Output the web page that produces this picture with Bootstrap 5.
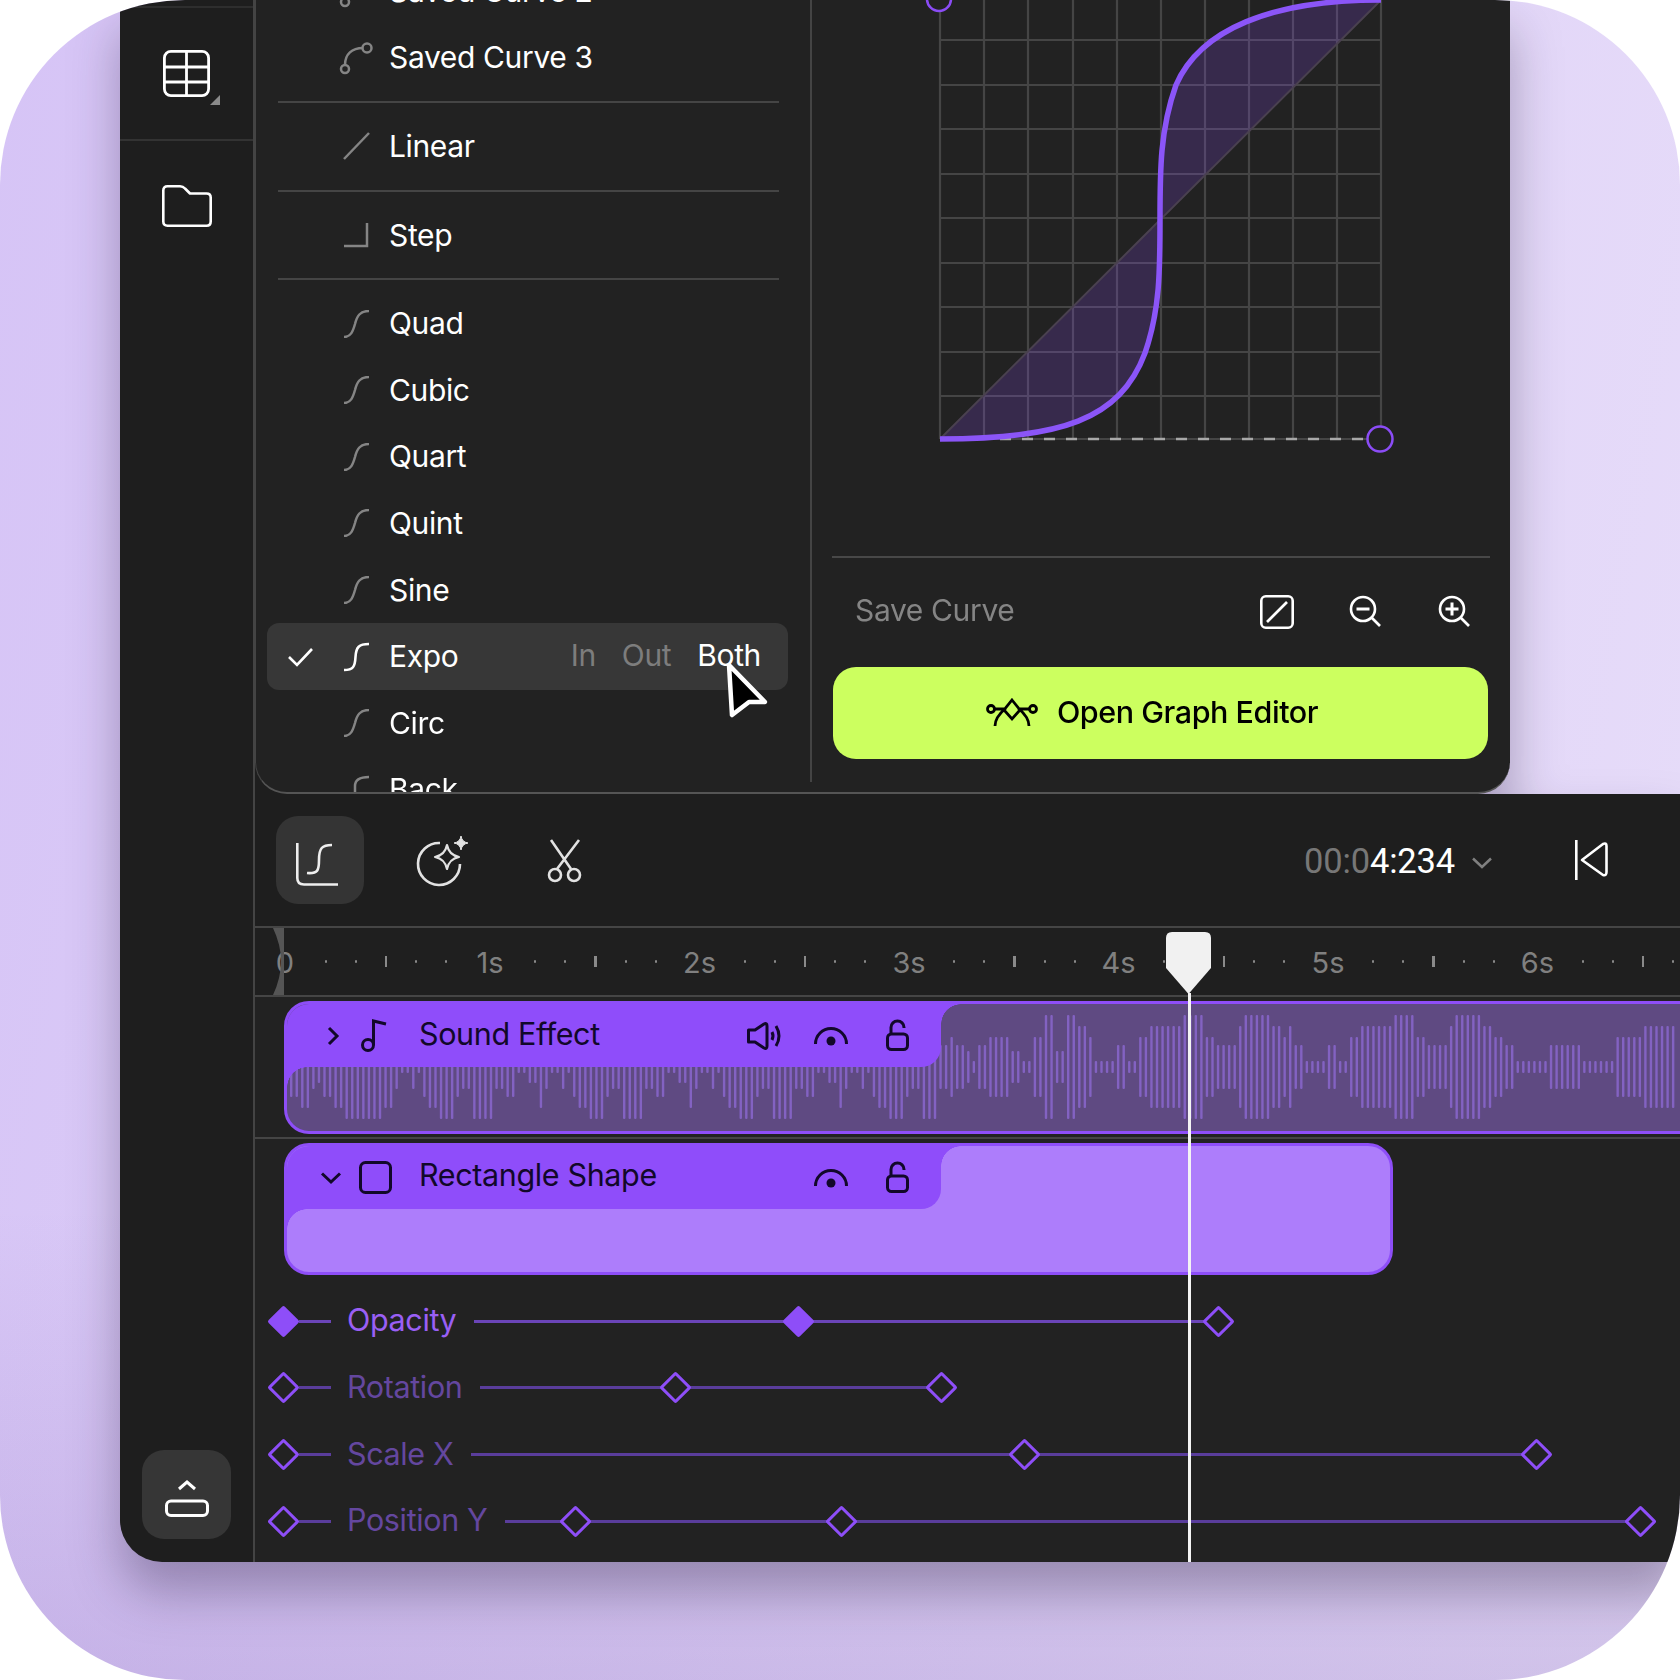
<!DOCTYPE html>
<html lang="en">
<head>
<meta charset="UTF-8">
<title>Curve Editor</title>
<link href="https://cdn.jsdelivr.net/npm/bootstrap@5.3.0/dist/css/bootstrap.min.css" rel="stylesheet">
<style>
body { background: #fff; margin: 0; font-family: Inter, "Liberation Sans", sans-serif; }
svg { display: block; overflow: visible; flex: none; }
.tile { width: 1680px; height: 1680px; border-radius: 185px; overflow: hidden; padding-left: 120px;
  background: linear-gradient(180deg, transparent 72%, rgba(120,90,170,.2)), linear-gradient(100deg, #d6c4f6, #e7ddf9); }
.appwin { width: 1560px; height: 1562px; filter: drop-shadow(0 30px 25px rgba(20,10,40,.3)); }
.rail { width: 135px; flex: none; background: #1e1e1e; border-right: 2px solid #444; border-bottom-left-radius: 42px; box-shadow: 34px 0 0 #1e1e1e; }
.rail-top { height: 135px; margin-top: 6px; border-top: 2px solid #2e2e2e; border-bottom: 2px solid #333; }
.folder-ico { margin-top: 44px; }
.rail-btn { width: 89px; height: 89px; margin-bottom: 23px; background: #363636; border-radius: 22px; }
.rail-btn svg { margin-top: 7px; }
.main-col { width: 1425px; z-index: 1; }
.curve-panel { width: 1255px; height: 794px; flex: none; background: #222; border-bottom: 2px solid #555; border-left: 1px solid #444; border-radius: 0 0 32px 32px; overflow: hidden; }
.curve-list { width: 554px; flex: none; margin-top: -42px; color: #fff; font-size: 30px; letter-spacing: -.012em; }
.ease-row { height: 66.6px; margin: 0 22px 0 11px; padding: 0 27px 0 21px; border-radius: 12px; }
.ease-row.picked { background: #373737; }
.check-slot { width: 55px; flex: none; }
.icon-slot { width: 46px; flex: none; }
.list-rule { height: 2px; background: #454545; margin: 10px 31px 10px 22px; }
.dir-tabs { gap: 26px; color: #7d7d7d; margin-top: -3px; }
.dir-tabs .on { color: #fff; }
.ptr { position: absolute; left: 469px; top: 662px; }
.curve-side { width: 700px; flex: none; border-left: 2px solid #444; margin-bottom: 10px; height: 782px; }
.graph-box { height: 556px; flex: none; }
.side-rule { height: 2px; background: #484848; margin: 0 20px; flex: none; }
.save-row { height: 109px; padding: 0 40px 0 43px; color: #858585; font-size: 30px; letter-spacing: -.012em; flex: none; }
.save-row span { margin-top: -5px; }
.save-row svg { margin-top: -2px; }
.open-btn { height: 92px; margin: 0 22px 0 21px; padding: 0 16px 0 0; background: #ccff5f; border-radius: 23px; color: #000; font-size: 30.5px; font-weight: 500; letter-spacing: -.015em; gap: 20px; flex: none; }
.open-btn:hover { background: #ccff5f; color: #000; }
.open-btn span { margin-top: -3px; }
.timeline { flex-grow: 1; background: #222; position: relative; overflow: hidden; }
.tool-bar { height: 132px; background: #1e1e1e; padding: 0 72px 0 21px; flex: none; }
.tool-on { width: 88px; height: 88px; background: #343434; border-radius: 22px; }
.tool-on svg { margin: 7px 6px 0 0; }
.clock { font-size: 34.5px; color: #777; letter-spacing: -.005em; font-family: Roboto, Inter, sans-serif; margin-top: 3px; }
.clock b { color: #fff; font-weight: 400; }
.ruler { height: 71px; background: #1f1f1f; border-top: 2px solid #454545; border-bottom: 2px solid #454545; color: #808080; font-size: 29px; flex: none; position: relative; overflow: hidden; }
.sec-cell { width: 209.5px; flex: none; gap: 28px; }
.sec-cell:first-child { margin-left: -18.5px; }
.sec-name { width: 88px; margin-right: -28px; flex: none; text-align: center; padding-top: 2px; }
.sec-dot { width: 2px; height: 3px; background: #8a8a8a; border-radius: 1px; flex: none; }
.sec-tick { width: 2.5px; height: 11px; background: #8a8a8a; flex: none; }
.zero-mark { position: absolute; left: 18px; top: 0; }
.track { padding: 4px 0 3px 29px; border-bottom: 2px solid #454545; }
.track-plain { padding: 4px 0 13px 29px; }
.clip { position: relative; height: 133px; border: 3px solid #8e4ef8; border-radius: 25px; overflow: hidden; background: #5f4a82; }
.clip-sound { width: 1500px; }
.clip-shape { width: 1109px; height: 132px; background: #ad7dfb; }
.clip-head { position: absolute; left: 0; top: 0; width: 654px; height: 63px; background: #8f4dfa; padding: 0 32px 0 40px; border-radius: 0 0 20px 0; color: #12082a; font-size: 30.5px; letter-spacing: -.012em; }
.clip-head::before, .clip-head::after { content: ""; position: absolute; width: 20px; height: 20px; }
.clip-head::before { left: 0; top: 100%; background: radial-gradient(circle at 100% 100%, transparent 19.5px, #8f4dfa 20px); }
.clip-head::after { left: 100%; top: 0; background: radial-gradient(circle at 100% 100%, transparent 19.5px, #8f4dfa 20px); }
.clip-name { margin: -3px auto 0 32px; }
.clip-shape .clip-name { margin-left: 27px; margin-top: -5px; }
.clip-shape .chev-down { margin-left: -6px; }
.kf-row { position: relative; height: 66.6px; padding-left: 13px; font-size: 30.5px; letter-spacing: -.012em; color: #64479f; }
.kf-row.live { color: #9a5ff5; }
.kf-stub { width: 32px; height: 3px; background: #5a3d9c; flex: none; }
.kf-line { height: 3px; background: #5a3d9c; flex-grow: 1; margin-left: 18px; }
.live .kf-stub, .live .kf-line { background: #6b45b8; }
.kf-name { margin-left: 16px; flex: none; margin-top: -2px; }
.kf { width: 23px; height: 23px; border: 3px solid #8e4ef8; border-radius: 2px; background: #222; transform: rotate(45deg); flex: none; margin: 0 4px; }
.kf.full { background: #8e4ef8; }
.kf.placed { position: absolute; top: 21.8px; margin: 0; }
.play-head { position: absolute; left: 911px; top: 138px; width: 45px; bottom: 0; z-index: 2; }
.play-line { position: absolute; left: 22px; top: 61px; bottom: 0; width: 2.5px; background: #f4f4f4; }
</style>
</head>
<body>
<svg width="0" height="0" class="position-absolute">
  <symbol id="ease" viewBox="0 0 27 28"><path d="M1 27C8 27 10 21 12 14C14 6 17 1 26 1" fill="none" stroke="#858585" stroke-width="2.5"/></symbol>
</svg>

<div class="tile">
  <div class="appwin d-flex">
    <aside class="rail d-flex flex-column align-items-center position-relative">
      <div class="rail-top w-100 d-flex justify-content-center align-items-center">
        <svg width="47" height="47" viewBox="0 0 47 47" fill="none" stroke="#fff" stroke-width="2.8"><rect x="1.4" y="1.4" width="44.2" height="44.2" rx="6.5"/><path d="M23.5 1V46M1 17H46M1 32H46"/><path d="M57 55H47L57 45Z" fill="#8a8a8a" stroke="none"/></svg>
      </div>
      <svg class="folder-ico" width="50" height="42" viewBox="0 0 50 42" fill="none" stroke="#fff" stroke-width="2.6" stroke-linejoin="round"><path d="M1.3 5.5Q1.3 1.3 5.5 1.3H18Q21 1.3 23 3.5L28 8.5H44.5Q48.7 8.5 48.7 12.5V36.5Q48.7 40.7 44.5 40.7H5.5Q1.3 40.7 1.3 36.5Z"/></svg>
      <div class="rail-btn mt-auto d-flex align-items-center justify-content-center">
        <svg width="44" height="37" viewBox="0 0 44 37" fill="none" stroke="#fff" stroke-width="3"><path d="M14 9L22 2L30 9"/><rect x="1.5" y="21" width="41" height="14.5" rx="4.5"/></svg>
      </div>
    </aside>

    <div class="main-col d-flex flex-column">
      <section class="curve-panel d-flex position-relative">
        <div class="curve-list">
          <div class="ease-row d-flex align-items-center"><span class="check-slot"></span><span class="icon-slot"><svg width="27" height="28" viewBox="0 0 27 28" fill="none" stroke="#858585" stroke-width="2.5"><circle cx="2" cy="25" r="4"/><circle cx="24" cy="4" r="4.5"/><path d="M2 21C2 10 9 4 20 4"/></svg></span>Saved Curve 2</div>
          <div class="ease-row d-flex align-items-center"><span class="check-slot"></span><span class="icon-slot"><svg width="27" height="28" viewBox="0 0 27 28" fill="none" stroke="#858585" stroke-width="2.5"><circle cx="2" cy="25" r="4"/><circle cx="24" cy="4" r="4.5"/><path d="M2 21C2 10 9 4 20 4"/></svg></span>Saved Curve 3</div>
          <div class="list-rule"></div>
          <div class="ease-row d-flex align-items-center"><span class="check-slot"></span><span class="icon-slot"><svg width="27" height="28" viewBox="0 0 27 28" fill="none" stroke="#858585" stroke-width="2.5"><path d="M1 27L26 1"/></svg></span>Linear</div>
          <div class="list-rule"></div>
          <div class="ease-row d-flex align-items-center"><span class="check-slot"></span><span class="icon-slot"><svg width="27" height="28" viewBox="0 0 27 28" fill="none" stroke="#858585" stroke-width="2.5"><path d="M1 25H24V2"/></svg></span>Step</div>
          <div class="list-rule"></div>
          <div class="ease-row d-flex align-items-center"><span class="check-slot"></span><span class="icon-slot"><svg width="27" height="28"><use href="#ease"/></svg></span>Quad</div>
          <div class="ease-row d-flex align-items-center"><span class="check-slot"></span><span class="icon-slot"><svg width="27" height="28"><use href="#ease"/></svg></span>Cubic</div>
          <div class="ease-row d-flex align-items-center"><span class="check-slot"></span><span class="icon-slot"><svg width="27" height="28"><use href="#ease"/></svg></span>Quart</div>
          <div class="ease-row d-flex align-items-center"><span class="check-slot"></span><span class="icon-slot"><svg width="27" height="28"><use href="#ease"/></svg></span>Quint</div>
          <div class="ease-row d-flex align-items-center"><span class="check-slot"></span><span class="icon-slot"><svg width="27" height="28"><use href="#ease"/></svg></span>Sine</div>
          <div class="ease-row picked d-flex align-items-center">
            <span class="check-slot"><svg width="25" height="20" viewBox="0 0 25 20" fill="none" stroke="#fff" stroke-width="2.6"><path d="M1 10L9 18L24 2"/></svg></span>
            <span class="icon-slot"><svg width="27" height="28" viewBox="0 0 27 28" fill="none" stroke="#fff" stroke-width="2.6"><path d="M1 27C10 27 12 24 12.5 14C13 4 16 1 26 1"/></svg></span>Expo
            <span class="dir-tabs d-flex ms-auto"><span>In</span><span>Out</span><span class="on">Both</span></span>
          </div>
          <div class="ease-row d-flex align-items-center"><span class="check-slot"></span><span class="icon-slot"><svg width="27" height="28"><use href="#ease"/></svg></span>Circ</div>
          <div class="ease-row d-flex align-items-center"><span class="check-slot"></span><span class="icon-slot"><svg width="27" height="28" viewBox="0 0 27 28" fill="none" stroke="#858585" stroke-width="2.5"><path d="M12 28V10C12 4 17 1 26 1"/></svg></span>Back</div>
        </div>

        <svg class="ptr" width="42" height="54" viewBox="727 663 42 54"><path d="M731 666L767 703H751L734 716Z" fill="#000" stroke="#fff" stroke-width="4.5" stroke-linejoin="round"/></svg>

        <div class="curve-side d-flex flex-column">
          <div class="graph-box">
            <svg width="698" height="556" viewBox="812 0 698 556" fill="none">
              <path d="M940-3V439M984-3V439M1028-3V439M1073-3V439M1117-3V439M1161-3V439M1205-3V439M1249-3V439M1293-3V439M1337-3V439M1381-3V439M940 40H1381M940 85H1381M940 129H1381M940 174H1381M940 218H1381M940 263H1381M940 307H1381M940 352H1381M940 396H1381M940 439H1381" stroke="#454545" stroke-width="2.2"/>
              <path d="M940 439C1060 439 1120 420 1145 353C1160 310 1160 270 1160 220C1160 170 1160 130 1176 85C1200 30 1270 0 1381 0Z" fill="#8b4cf6" fill-opacity=".2"/>
              <path d="M940 439L1381 0" stroke="#4a4150" stroke-width="2"/>
              <path d="M1000 439H1366" stroke="#a8a8a8" stroke-width="2.5" stroke-dasharray="11 11"/>
              <path d="M940 439C1060 439 1120 420 1145 353C1160 310 1160 270 1160 220C1160 170 1160 130 1176 85C1200 30 1270 0 1381 0" stroke="#8b55f8" stroke-width="5.5"/>
              <circle cx="939" cy="-1" r="12" fill="#222" stroke="#8b4cf6" stroke-width="2.5"/>
              <circle cx="1380" cy="439" r="12.5" fill="#222" stroke="#8b4cf6" stroke-width="2.5"/>
            </svg>
          </div>
          <div class="side-rule"></div>
          <div class="save-row d-flex align-items-center">
            <span class="me-auto">Save Curve</span>
            <svg width="34" height="34" viewBox="0 0 34 34" fill="none" stroke="#fff" stroke-width="2.6"><rect x="1.3" y="1.3" width="31.4" height="31.4" rx="4.5"/><path d="M7 27L27 7"/></svg>
            <svg style="margin-left:55px" width="32" height="31" viewBox="0 0 32 31" fill="none" stroke="#fff" stroke-width="2.6"><circle cx="14" cy="13" r="12"/><path d="M23 22L31 30"/><path d="M7.5 13H20.5" stroke-width="3"/></svg>
            <svg style="margin-left:57px" width="32" height="31" viewBox="0 0 32 31" fill="none" stroke="#fff" stroke-width="2.6"><circle cx="14" cy="13" r="12"/><path d="M23 22L31 30"/><path d="M7.5 13H20.5M14 6.5V19.5" stroke-width="3"/></svg>
          </div>
          <button class="btn open-btn d-flex align-items-center justify-content-center border-0" type="button">
            <svg width="50" height="28" viewBox="0 0 50 28" fill="none" stroke="#000" stroke-width="2.8"><circle cx="4" cy="10" r="3.5"/><circle cx="46" cy="10" r="3.5"/><path d="M25 1L33 11L25 20L17 11ZM8 10H17M33 10H42M8 27C8 20 13 14 19 9M42 27C42 20 37 14 31 9"/></svg>
            <span>Open Graph Editor</span>
          </button>
        </div>
      </section>

      <section class="timeline d-flex flex-column">
        <div class="tool-bar d-flex align-items-center">
          <div class="tool-on d-flex align-items-center justify-content-center">
            <svg width="43" height="44" viewBox="0 0 43 44" fill="none" stroke="#eee" stroke-width="2.6"><path d="M1.3 1V36Q1.3 42.5 8 42.5H42"/><path d="M11 31C22 32 23 28 23 18C23 6 26 3 36 3"/></svg>
          </div>
          <svg style="margin:3px 0 0 52px" width="54" height="54" viewBox="0 0 54 54" fill="none" stroke="#e2e2e2" stroke-width="2.6"><path d="M24 8A21 21 0 1 0 44 29"/><path d="M31 10Q33 20 43 22Q33 24 31 34Q29 24 19 22Q29 20 31 10Z" stroke-width="2.2" stroke-linejoin="round"/><path d="M45 1Q46 7 52 8Q46 9 45 15Q44 9 38 8Q44 7 45 1Z" fill="#e2e2e2" stroke-width="1"/></svg>
          <svg style="margin-left:77px" width="36" height="46" viewBox="0 0 36 46" fill="none" stroke="#e2e2e2" stroke-width="2.6"><path d="M4 3L24 32M32 3L10 32"/><circle cx="8" cy="38" r="6"/><circle cx="27" cy="38" r="6"/></svg>
          <span class="clock ms-auto">00:0<b>4:234</b></span>
          <svg style="margin:5px 0 0 17px" width="20" height="12" viewBox="0 0 20 12" fill="none" stroke="#808080" stroke-width="2.5"><path d="M1 1.5L10 10L19 1.5"/></svg>
          <svg style="margin-left:83px" width="33" height="40" viewBox="0 0 33 40" fill="none" stroke="#fff" stroke-width="2.6" stroke-linejoin="round"><path d="M1.3 0V40"/><path d="M7 20L28 4Q31.5 2.5 31.5 6V32Q31.5 36 28 35Z"/></svg>
        </div>

        <div class="ruler d-flex align-items-center" id="ruler">
          <svg class="zero-mark" width="12" height="67" viewBox="0 0 12 67"><path d="M0 0H11V67H0Q8 50 8 33Q8 17 0 0Z" fill="#555"/></svg>
        </div>

        <div class="track">
          <div class="clip clip-sound">
            <svg id="wave" width="1494" height="127" viewBox="0 0 1494 127"></svg>
            <div class="clip-head d-flex align-items-center">
              <svg width="12" height="20" viewBox="0 0 12 20" fill="none" stroke="#12082a" stroke-width="3"><path d="M2 2L10 10L2 18"/></svg>
              <svg style="margin-left:22px" width="26" height="33" viewBox="0 0 26 33" fill="none" stroke="#12082a" stroke-width="3"><circle cx="7" cy="26" r="5.5"/><path d="M12.5 26V2L25 5"/></svg>
              <span class="clip-name">Sound Effect</span>
              <svg width="35" height="28" viewBox="0 0 35 28" fill="none" stroke="#12082a" stroke-width="3" stroke-linejoin="round"><path d="M1.5 8H8L17 2Q20 .5 20 4V24Q20 27.5 17 26L8 20H1.500Z"/><path d="M25 10Q27 14 25 18M29 4Q35 14 29 24"/></svg>
              <svg style="margin-left:32px" width="34" height="18" viewBox="0 0 34 18" fill="none" stroke="#12082a" stroke-width="3"><path d="M1.5 17A15.5 15.5 0 0 1 32.5 17"/><circle cx="17" cy="14" r="4.5" fill="#12082a" stroke="none"/></svg>
              <svg style="margin-left:38px" width="23" height="31" viewBox="0 0 23 31" fill="none" stroke="#12082a" stroke-width="3"><rect x="1.5" y="14" width="20" height="15.5" rx="4"/><path d="M5 14V7.5A6.500 6.500 0 0 1 18 7.5V8"/></svg>
            </div>
          </div>
        </div>

        <div class="track-plain">
          <div class="clip clip-shape">
            <div class="clip-head d-flex align-items-center">
              <svg class="chev-down" width="20" height="12" viewBox="0 0 20 12" fill="none" stroke="#12082a" stroke-width="3"><path d="M1 1.5L10 10L19 1.5"/></svg>
              <svg style="margin-left:18px" width="33" height="33" viewBox="0 0 33 33" fill="none" stroke="#12082a" stroke-width="3"><rect x="1.5" y="1.5" width="30" height="30" rx="5"/></svg>
              <span class="clip-name">Rectangle Shape</span>
              <svg width="34" height="18" viewBox="0 0 34 18" fill="none" stroke="#12082a" stroke-width="3"><path d="M1.5 17A15.5 15.5 0 0 1 32.5 17"/><circle cx="17" cy="14" r="4.5" fill="#12082a" stroke="none"/></svg>
              <svg style="margin-left:38px" width="23" height="31" viewBox="0 0 23 31" fill="none" stroke="#12082a" stroke-width="3"><rect x="1.5" y="14" width="20" height="15.5" rx="4"/><path d="M5 14V7.5A6.500 6.500 0 0 1 18 7.5V8"/></svg>
            </div>
          </div>
        </div>

        <div class="kf-row live d-flex align-items-center" style="width:963px">
          <span class="kf full"></span><span class="kf-stub"></span><span class="kf-name">Opacity</span><span class="kf-line"></span>
          <span class="kf placed full" style="left:532px"></span><span class="kf placed" style="left:952px"></span>
        </div>
        <div class="kf-row d-flex align-items-center" style="width:686px">
          <span class="kf"></span><span class="kf-stub"></span><span class="kf-name">Rotation</span><span class="kf-line"></span>
          <span class="kf placed" style="left:409px"></span><span class="kf placed" style="left:675px"></span>
        </div>
        <div class="kf-row d-flex align-items-center" style="width:1280px">
          <span class="kf"></span><span class="kf-stub"></span><span class="kf-name">Scale X</span><span class="kf-line"></span>
          <span class="kf placed" style="left:758px"></span><span class="kf placed" style="left:1270px"></span>
        </div>
        <div class="kf-row d-flex align-items-center" style="width:1385px">
          <span class="kf"></span><span class="kf-stub"></span><span class="kf-name">Position Y</span><span class="kf-line"></span>
          <span class="kf placed" style="left:309px"></span><span class="kf placed" style="left:575px"></span><span class="kf placed" style="left:1374px"></span>
        </div>

        <div class="play-head">
          <svg width="45" height="62" viewBox="0 0 45 62"><path d="M6 0H39Q45 0 45 6V36L22.5 62L0 36V6Q0 0 6 0Z" fill="#f1f1f1"/></svg>
          <div class="play-line"></div>
        </div>
      </section>
    </div>
  </div>
</div>

<script src="https://cdn.jsdelivr.net/npm/bootstrap@5.3.0/dist/js/bootstrap.bundle.min.js"></script>
<script>
  // ruler: one cell per second
  var ruler = document.getElementById("ruler");
  ["0", "1s", "2s", "3s", "4s", "5s", "6s", ""].forEach(function (name, i) {
    var cell = document.createElement("div");
    cell.className = "sec-cell d-flex align-items-center";
    var pad = i === 0 ? ' style="padding-left:9px"' : "";
    cell.innerHTML = '<span class="sec-name"' + pad + ">" + name + "</span>" +
      '<i class="sec-dot"></i><i class="sec-dot"></i><i class="sec-tick"></i><i class="sec-dot"></i><i class="sec-dot"></i>';
    ruler.insertBefore(cell, ruler.querySelector(".zero-mark"));
  });

  var levels = { a: 52, b: 41, c: 30, d: 22, e: 16, f: 6 };
  var loop = "cbbaaacddaaaaddccffeebdffdf";
  var head = "ccbbdeccbbaaaaaaabbdffdf";
  while (head.length < 117) head += loop;
  var bars = head.slice(0, 117) + "ddcddefddcc" +
    "cceeffccaaeeaabbcffffddffccbbbbbbaaaaccddddbaaaaabbcbddffffddffccbbbbbbaaaaccddddbaaaaabbccddffffffddddddffffffcccccbbbbbb";
  var svg = "";
  for (var i = 0; i < bars.length; i++) {
    var h = levels[bars[i]];
    svg += '<rect x="' + (3 + i * 5.55).toFixed(2) + '" y="' + (63 - h) + '" width="2.4" height="' + h * 2 + '" rx="1" fill="#8362c2"/>';
  }
  document.getElementById("wave").innerHTML = svg;
</script>
</body>
</html>
